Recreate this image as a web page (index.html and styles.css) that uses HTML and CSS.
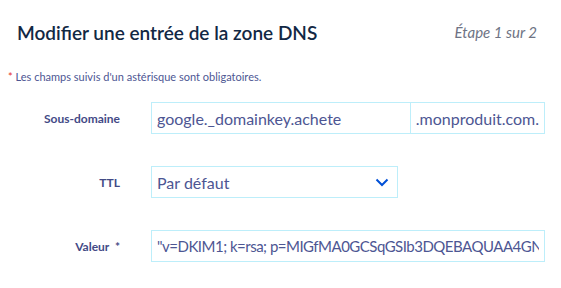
FILE: index.html
```html
<!DOCTYPE html>
<html lang="fr">
<head>
    <meta charset="UTF-8" />
    <meta name="viewport" content="width=device-width, initial-scale=1" />
    <title>Modifier une entrée de la zone DNS</title>
    <link rel="stylesheet" href="styles.css">
</head>
<body>

    <header class="step-header">
        <h1>Modifier une entrée de la zone DNS</h1>
        <span class="step">Étape 1 sur 2</span>
    </header>

    <p class="required-note"><span class="star">*</span> Les champs suivis d'un astérisque sont obligatoires.</p>

    <form class="dns-form" action="#" method="post">
        <div class="row">
            <label for="subdomain">Sous-domaine</label>
            <div class="input-group">
                <input type="text" id="subdomain" value="google._domainkey.achete" />
                <span class="suffix">.monproduit.com.</span>
            </div>
        </div>

        <div class="row">
            <label for="ttl">TTL</label>
            <div class="select-box">
                <span>Par défaut</span>
                <svg width="14" height="9" viewBox="0 0 14 9"><path d="M1.5 1.5 L7 7 L12.5 1.5" fill="none" stroke="#0050d7" stroke-width="2"/></svg>
            </div>
        </div>

        <div class="row">
            <label for="value">Valeur &nbsp;*</label>
            <input type="text" id="value" class="wide" value="&quot;v=DKIM1; k=rsa; p=MIGfMA0GCSqGSIb3DQEBAQUAA4GNADCBiQKBgQC" />
        </div>
    </form>

</body>
</html>
```

FILE: styles.css
```css
body {
    margin: 0;
    font-family: 'Lato', sans-serif;
    background-color: white;
    color: #4d5693;
}

.step-header {
    display: flex;
    justify-content: space-between;
    align-items: center;
    padding: 16px 24px 0 17px;
    height: 32px;
}

.step-header h1 {
    margin: 0;
    font-size: 19px;
    font-weight: 600;
    color: #122844;
}

.step {
    font-style: italic;
    font-size: 15px;
    color: #6e7384;
}

.required-note {
    margin: 22px 0 0 8px;
    font-size: 11px;
    line-height: 14px;
}

.star {
    color: #e5322d;
}

.dns-form {
    margin-top: 18px;
}

.row {
    display: grid;
    grid-template-columns: 120px auto;
    column-gap: 31px;
    align-items: center;
    margin-bottom: 32px;
}

.row label {
    text-align: right;
    font-size: 12px;
    font-weight: bold;
    color: #434a86;
}

.input-group {
    display: flex;
    width: 394px;
}

input,
.suffix,
.select-box {
    box-sizing: border-box;
    height: 32px;
    border: 1px solid #bdeefa;
    font-family: inherit;
    font-size: 16px;
    color: #4d5693;
    padding: 0 5px;
    outline: none;
}

.input-group input {
    width: 261px;
}

.suffix {
    display: flex;
    align-items: center;
    border-left: none;
    flex: 1;
}

.select-box {
    width: 247px;
    display: flex;
    align-items: center;
    justify-content: space-between;
    padding-right: 8px;
}

.wide {
    width: 394px;
    font-size: 15px;
    letter-spacing: -0.5px;
}
```
